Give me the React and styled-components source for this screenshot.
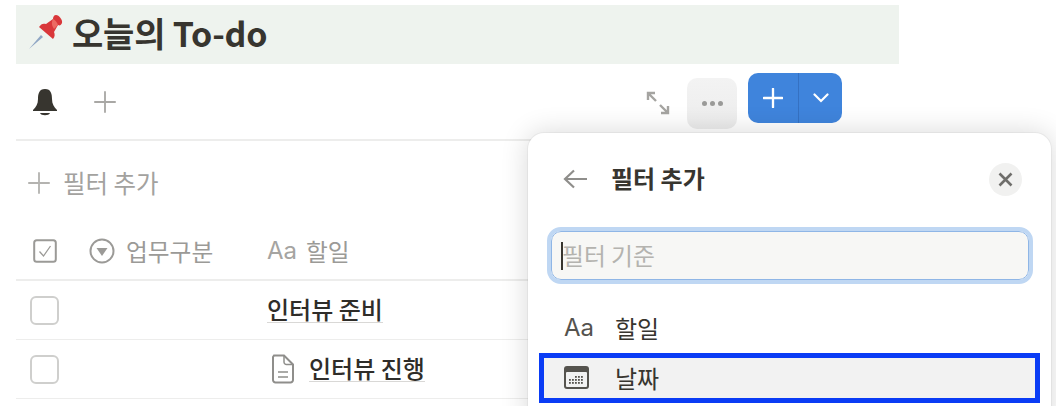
import React from "react";
import styled, { createGlobalStyle } from "styled-components";

const GlobalStyle = createGlobalStyle`
  html, body {
    margin: 0;
    padding: 0;
    background: #fff;
    overflow: hidden;
  }
  body {
    font-family: "Noto Sans CJK KR", "Noto Sans", sans-serif;
    color: #37352f;
  }
`;

const Page = styled.main`
  position: relative;
  width: 1056px;
  height: 406px;
  overflow: hidden;
  padding: 5px 0 0 16px;
  box-sizing: border-box;
`;

const Content = styled.div`
  width: 883px;
`;

const Heading = styled.h1`
  height: 59px;
  box-sizing: border-box;
  margin: 0;
  padding: 0 0 5px 12px;
  display: flex;
  align-items: center;
  gap: 8px;
  background: #eef3ee;
  font-size: 34px;
  font-weight: 700;
  letter-spacing: -0.2px;
  color: #37352f;
`;

const Toolbar = styled.div`
  height: 75px;
  display: flex;
  align-items: center;
  border-bottom: 2px solid #ededec;
  padding-left: 16px;
`;

const ViewIcons = styled.div`
  display: flex;
  align-items: center;
  gap: 36px;
`;

const Actions = styled.div`
  margin-left: 530px;
  display: flex;
  align-items: center;
`;

const ExpandWrap = styled.div`
  display: flex;
  margin-top: 2px;
`;

const MenuButton = styled.div`
  width: 50px;
  height: 51px;
  margin: 3px 0 0 17px;
  border-radius: 10px;
  background: linear-gradient(#f3f3f3, #ececec);
  display: flex;
  align-items: center;
  justify-content: center;
  gap: 3px;
`;

const Dot = styled.span`
  width: 5px;
  height: 5px;
  border-radius: 50%;
  background: #9a9a98;
`;

const SplitButton = styled.div`
  width: 94px;
  height: 50px;
  margin: -7px 0 0 11px;
  border-radius: 10px;
  background: #3f84dc;
  display: flex;
`;

const SplitPart = styled.div`
  display: flex;
  align-items: center;
  justify-content: center;
  width: ${(p) => p.$width}px;
  border-right: ${(p) => (p.$divider ? "1px solid #3571c2" : "none")};
`;

const FilterBar = styled.div`
  height: 85px;
  box-sizing: border-box;
  padding: 0 0 2px 12px;
  display: flex;
  align-items: center;
  gap: 13px;
  font-size: 24.500px;
  color: #a3a29f;
`;

const Row = styled.div`
  display: grid;
  grid-template-columns: 58px 193px 1fr;
  align-items: center;
  height: ${(p) => p.$height}px;
  border-bottom: ${(p) => p.$line}px solid #ededec;
`;

const HeaderRow = styled(Row)`
  height: 49px;
  padding-bottom: 4px;
`;

const CheckCell = styled.div`
  display: flex;
  padding-left: ${(p) => (p.$small ? 17 : 14)}px;
`;

const Checkbox = styled.div`
  width: 29px;
  height: 29px;
  box-sizing: border-box;
  border: 2px solid #cfcfcd;
  border-radius: 6px;
`;

const HeaderCell = styled.div`
  display: flex;
  align-items: center;
  gap: ${(p) => p.$gap}px;
  font-size: 23.700px;
  color: #9b9a97;
  padding-left: ${(p) => p.$pad || 0}px;
`;

const AaLabel = styled.span`
  font-family: "Inter", "Liberation Sans", sans-serif;
  font-size: ${(p) => p.$size}px;
  color: ${(p) => p.$color};
`;

const TaskCell = styled.div`
  display: flex;
  align-items: center;
  gap: 14px;
  padding-left: ${(p) => p.$pad}px;
`;

const TaskLink = styled.span`
  font-size: 24px;
  font-weight: 500;
  line-height: 26px;
  margin-bottom: 2px;
  color: #2f2d29;
  border-bottom: 1px solid #d9d8d6;
`;

const Popup = styled.section`
  position: absolute;
  left: 528px;
  top: 133px;
  width: 523px;
  height: 300px;
  background: #fff;
  border-radius: 16px;
  box-shadow: 0 0 0 1px rgba(15, 15, 15, 0.04), 0 0 28px rgba(15, 15, 15, 0.16);
`;

const PopupHeader = styled.header`
  height: 92px;
  margin-bottom: 6px;
  padding: 0 29px 0 35px;
  display: flex;
  align-items: center;
  gap: 24px;
  box-sizing: border-box;
`;

const PopupTitle = styled.h2`
  flex: 1;
  margin: 0 0 3px;
  font-size: 24px;
  font-weight: 600;
  color: #37352f;
`;

const CloseButton = styled.div`
  width: 33px;
  height: 33px;
  border-radius: 50%;
  background: #f1f1f0;
  display: flex;
  align-items: center;
  justify-content: center;
`;

const SearchBox = styled.div`
  width: 478px;
  height: 49px;
  margin-left: 23px;
  box-sizing: border-box;
  border: 1px solid #8fb6e6;
  outline: 4px solid #bfd7f3;
  outline-offset: 0;
  border-radius: 10px;
  background: #f7f7f5;
  display: flex;
  align-items: center;
  padding: 0 0 3px 9px;
  font-size: 23.800px;
  color: #b4b3af;
`;

const Caret = styled.span`
  width: 2px;
  height: 28px;
  margin: 3px -1px 0 0;
  background: #37352f;
`;

const OptionList = styled.div`
  margin: 23px 0 0 11px;
  width: 501px;
`;

const Option = styled.div`
  height: 50px;
  box-sizing: border-box;
  display: flex;
  align-items: center;
  padding: 0 0 2px ${(p) => (p.$active ? 20 : 25)}px;
  font-size: 24px;
  color: #37352f;
  background: ${(p) => (p.$active ? "#f2f2f2" : "transparent")};
  border: ${(p) => (p.$active ? "5px solid #0a3cf5" : "none")};
`;

const OptionIcon = styled.span`
  width: 51px;
  display: flex;
  align-items: center;
`;

const Plus = ({ size, color, width = 2 }) => (
  <svg width={size} height={size} viewBox="0 0 24 24" fill="none" stroke={color} strokeWidth={width} strokeLinecap="round">
    <path d="M12 1v22M1 12h22" />
  </svg>
);

const PushPin = () => (
  <svg width="36" height="36" viewBox="0 0 36 36">
    <path d="M1 35 L13 21 L15 23 Z" fill="#8fa6c4" />
    <path d="M11 13 L25 25 C27 23 27 20 26 18 L30 11 C32 12 33 11 34 9 C35 6 31 1 28 1 C26 1 25 3 25 5 L18 10 C15 9 13 10 11 13 Z" fill="#d9373a" />
    <path d="M25 5 C27 6 29 8 30 11 L26 15 C24 12 23 9 25 5 Z" fill="#ec6a62" />
  </svg>
);

const Bell = () => (
  <svg width="26" height="28" viewBox="0 0 26 28" fill="#37352f">
    <path d="M13 1 C7 1 6 6 6 11 C6 16 4 19 1 22 L1 23 L25 23 L25 22 C22 19 20 16 20 11 C20 6 19 1 13 1 Z" />
    <path d="M8 25 L18 25 C17 28 9 28 8 25 Z" />
  </svg>
);

const Expand = () => (
  <svg width="24" height="24" viewBox="0 0 24 24" fill="none" stroke="#a5a4a1" strokeWidth="2.400">
    <path d="M2 9V2h7M2 2l8 8M22 15v7h-7M22 22l-8-8" />
  </svg>
);

const Chevron = () => (
  <svg width="16" height="10" viewBox="0 0 16 10" fill="none" stroke="#fff" strokeWidth="2.200" strokeLinecap="round">
    <path d="M1.500 1.500L8 8l6.500-6.500" />
  </svg>
);

const CheckHeader = () => (
  <svg width="24" height="24" viewBox="0 0 24 24" fill="none" stroke="#9b9a97">
    <rect x="1.200" y="1.200" width="21.600" height="21.600" rx="2.500" strokeWidth="2" />
    <path d="M6.500 12.500l4 4.500 7-10" strokeWidth="1.300" />
  </svg>
);

const SelectIcon = () => (
  <svg width="26" height="26" viewBox="0 0 26 26" fill="none">
    <circle cx="13" cy="13" r="11.500" stroke="#9b9a97" strokeWidth="2" />
    <path d="M7.500 10h11L13 18z" fill="#9b9a97" />
  </svg>
);

const PageIcon = () => (
  <svg width="24" height="30" viewBox="0 0 24 30" fill="none" stroke="#8f8e8b" strokeWidth="2">
    <path d="M3 1.500h10l9 9V26a2.500 2.500 0 0 1-2.500 2.500h-15A2.500 2.500 0 0 1 2 26V3z" />
    <path d="M13 1.500V8a2.500 2.500 0 0 0 2.500 2.500H22M7 18h10M7 23h10" strokeWidth="1.500" />
  </svg>
);

const BackArrow = () => (
  <svg width="24" height="20" viewBox="0 0 24 20" fill="none" stroke="#8f8e8b" strokeWidth="2.200">
    <path d="M24 10H2M11 1.500L2 10l9 8.500" />
  </svg>
);

const CloseIcon = () => (
  <svg width="15" height="15" viewBox="0 0 15 15" fill="none" stroke="#6f6e6b" strokeWidth="2.600">
    <path d="M1.500 1.500l12 12M13.500 1.500l-12 12" />
  </svg>
);

const CalendarIcon = () => {
  const dots = [];
  for (let y = 10; y <= 18; y += 3) {
    for (let x = 5; x <= 19; x += 3) {
      if (y === 10 && x < 11) continue;
      if (y === 18 && x > 14) continue;
      dots.push(<rect key={`${x}-${y}`} x={x} y={y} width="1.800" height="1.800" fill="#55534e" />);
    }
  }
  return (
    <svg width="25" height="23" viewBox="0 0 25 23">
      <rect width="25" height="23" rx="3" fill="#55534e" />
      <rect x="2" y="6" width="21" height="15" rx="1" fill="#f2f2f2" />
      {dots}
    </svg>
  );
};

export default function App() {
  return (
    <Page>
      <GlobalStyle />
      <Content>
        <Heading>
          <PushPin />
          오늘의 To-do
        </Heading>
        <Toolbar>
          <ViewIcons>
            <Bell />
            <Plus size={22} color="#a9a8a5" />
          </ViewIcons>
          <Actions>
            <ExpandWrap>
              <Expand />
            </ExpandWrap>
            <MenuButton>
              <Dot />
              <Dot />
              <Dot />
            </MenuButton>
            <SplitButton>
              <SplitPart $width={51} $divider>
                <Plus size={20} color="#fff" width={2.800} />
              </SplitPart>
              <SplitPart $width={43}>
                <Chevron />
              </SplitPart>
            </SplitButton>
          </Actions>
        </Toolbar>
        <FilterBar>
          <Plus size={22} color="#b4b3b0" />
          필터 추가
        </FilterBar>
        <HeaderRow $line={2}>
          <CheckCell $small>
            <CheckHeader />
          </CheckCell>
          <HeaderCell $gap={11} $pad={15}>
            <SelectIcon />
            업무구분
          </HeaderCell>
          <HeaderCell $gap={9}>
            <AaLabel $size={24} $color="#a5a4a1">Aa</AaLabel>
            할일
          </HeaderCell>
        </HeaderRow>
        <Row $height={58} $line={1}>
          <CheckCell>
            <Checkbox />
          </CheckCell>
          <div />
          <TaskCell $pad={0}>
            <TaskLink>인터뷰 준비</TaskLink>
          </TaskCell>
        </Row>
        <Row $height={58} $line={1}>
          <CheckCell>
            <Checkbox />
          </CheckCell>
          <div />
          <TaskCell $pad={4}>
            <PageIcon />
            <TaskLink>인터뷰 진행</TaskLink>
          </TaskCell>
        </Row>
      </Content>
      <Popup>
        <PopupHeader>
          <BackArrow />
          <PopupTitle>필터 추가</PopupTitle>
          <CloseButton>
            <CloseIcon />
          </CloseButton>
        </PopupHeader>
        <SearchBox>
          <Caret />
          필터 기준
        </SearchBox>
        <OptionList>
          <Option>
            <OptionIcon>
              <AaLabel $size={24} $color="#55534e">Aa</AaLabel>
            </OptionIcon>
            할일
          </Option>
          <Option $active>
            <OptionIcon>
              <CalendarIcon />
            </OptionIcon>
            날짜
          </Option>
        </OptionList>
      </Popup>
    </Page>
  );
}
